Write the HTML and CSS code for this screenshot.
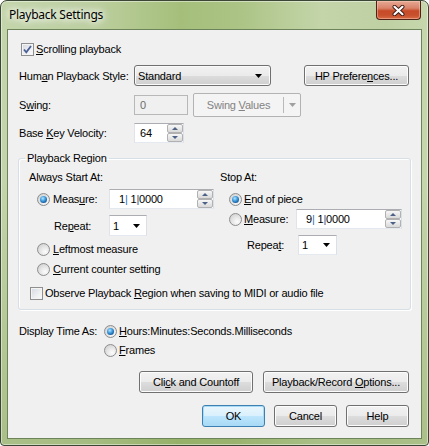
FILE: index.html
```html
<!DOCTYPE html>
<html lang="en">
<head>
    <meta charset="UTF-8">
    <title>Playback Settings</title>
    <link rel="stylesheet" href="styles.css">
</head>
<body>

<div class="window">
    <div class="titlebar">
        <span class="title">Playback Settings</span>
        <div class="close">
            <svg width="13" height="11" viewBox="0 0 13 11">
                <path d="M2.5 1.8 L10.5 9.2 M10.5 1.8 L2.5 9.2" stroke="#3d1a14" stroke-width="4" stroke-linecap="round"/>
                <path d="M2.5 1.8 L10.5 9.2 M10.5 1.8 L2.5 9.2" stroke="#fff" stroke-width="2.2" stroke-linecap="round"/>
            </svg>
        </div>
    </div>

    <div class="client">
        <!-- верхні налаштування -->
        <div class="row r-scroll">
            <span class="check on"><svg width="11" height="11" viewBox="0 0 11 11"><path d="M2 5.5 L4.3 8.3 L9 2" stroke="#4a5f97" stroke-width="1.8" fill="none"/></svg></span>
            <span class="txt"><u>S</u>crolling playback</span>
        </div>

        <div class="row r-style">
            <span class="lbl">Hum<u>a</u>n Playback Style:</span>
            <div class="combo">
                <span>Standard</span>
                <svg width="7" height="4" viewBox="0 0 7 4"><path d="M0 0 H7 L3.5 4 Z" fill="#000"/></svg>
            </div>
            <div class="btn hp"><span>HP Prefere<u>n</u>ces...</span></div>
        </div>

        <div class="row r-swing">
            <span class="lbl">S<u>w</u>ing:</span>
            <div class="field disabled sw">0</div>
            <div class="split">
                <span class="split-main">Swing <u>V</u>alues</span>
                <span class="split-arrow"><svg width="7" height="4" viewBox="0 0 7 4"><path d="M0 0 H7 L3.5 4 Z" fill="#a0a0a0"/></svg></span>
            </div>
        </div>

        <div class="row r-vel">
            <span class="lbl">Base <u>K</u>ey Velocity:</span>
            <div class="field spinfield vel">
                <span class="val">64</span>
                <span class="spin"><span class="up"></span><span class="down"></span></span>
            </div>
        </div>

        <!-- Область відтворення -->
        <fieldset class="region">
            <legend>Playback Region</legend>
            <div class="cols">
                <div class="col col-start">
                    <div class="head">Always Start At:</div>
                    <div class="row m-row">
                        <span class="radio on"></span>
                        <span class="rtxt w56">Meas<u>u</u>re:</span>
                        <div class="field spinfield mea">
                            <span class="val">1<i>|</i> 1<b>|</b>0000</span>
                            <span class="spin"><span class="up"></span><span class="down"></span></span>
                        </div>
                    </div>
                    <div class="row rep-row">
                        <span class="replbl l-left">Re<u>p</u>eat:</span>
                        <div class="field drop rep-l">
                            <span>1</span>
                            <svg width="7" height="4" viewBox="0 0 7 4"><path d="M0 0 H7 L3.5 4 Z" fill="#000"/></svg>
                        </div>
                    </div>
                    <div class="row opt-row">
                        <span class="radio"></span>
                        <span class="rtxt"><u>L</u>eftmost measure</span>
                    </div>
                    <div class="row opt-row">
                        <span class="radio"></span>
                        <span class="rtxt"><u>C</u>urrent counter setting</span>
                    </div>
                </div>

                <div class="col col-stop">
                    <div class="head">Stop At:</div>
                    <div class="row end-row">
                        <span class="radio on"></span>
                        <span class="rtxt tight"><u>E</u>nd of piece</span>
                    </div>
                    <div class="row m2-row">
                        <span class="radio"></span>
                        <span class="rtxt tight w52"><u>M</u>easure:</span>
                        <div class="field spinfield mea2">
                            <span class="val">9<i>|</i> 1<b>|</b>0000</span>
                            <span class="spin"><span class="up"></span><span class="down"></span></span>
                        </div>
                    </div>
                    <div class="row rep2-row">
                        <span class="replbl l-right">Repea<u>t</u>:</span>
                        <div class="field drop rep-r">
                            <span>1</span>
                            <svg width="7" height="4" viewBox="0 0 7 4"><path d="M0 0 H7 L3.5 4 Z" fill="#000"/></svg>
                        </div>
                    </div>
                </div>
            </div>

            <div class="row observe">
                <span class="check"></span>
                <span class="txt">Observe Playback <u>R</u>egion when saving to MIDI or audio file</span>
            </div>
        </fieldset>

        <div class="row disp-row">
            <span class="disp-lbl">Display Time As:</span>
            <span class="radio on"></span>
            <span class="rtxt tight"><u>H</u>ours:Minutes:Seconds.Milliseconds</span>
        </div>
        <div class="row disp-row2">
            <span class="radio"></span>
            <span class="rtxt tight"><u>F</u>rames</span>
        </div>

        <div class="btnrow first">
            <div class="btn b-click"><span>Cli<u>c</u>k and Countoff</span></div>
            <div class="btn b-opts"><span>Playback/Record <u>O</u>ptions...</span></div>
        </div>
        <div class="btnrow second">
            <div class="btn default b-small"><span>OK</span></div>
            <div class="btn b-small"><span>Cancel</span></div>
            <div class="btn b-small"><span>Help</span></div>
        </div>
    </div>
</div>

</body>
</html>
```

FILE: styles.css
```css
* {
    box-sizing: border-box;
}
body {
    margin: 0;
    background-color: #ffffff;
    font-family: "Liberation Sans", Arial, sans-serif;
    font-size: 11px;
    letter-spacing: -0.2px;
    color: #000000;
}
u {
    text-decoration: underline;
    text-underline-offset: 1px;
}

/* рамка вікна */
.window {
    width: 429px;
    height: 446px;
    border: 1px solid #3b4634;
    border-radius: 7px 7px 4px 4px;
    padding: 0 6px 6px 6px;
    display: flex;
    flex-direction: column;
    background:
        linear-gradient(180deg, rgba(255, 255, 255, 0) 40%, rgba(120, 150, 70, 0.35) 100%),
        linear-gradient(90deg, #c4d5ab 0%, #bccf9f 22%, #a5bf7b 42%, #abc384 55%, #c3d5a9 75%, #bfd1a3 90%, #c6d7ad 100%);
    box-shadow: inset 0 0 0 1px rgba(255, 255, 255, 0.45);
}
.titlebar {
    height: 28px;
    display: flex;
    align-items: flex-start;
}
.title {
    font-family: "Noto Sans", sans-serif;
    font-size: 12px;
    letter-spacing: -0.25px;
    line-height: 28px;
    padding-left: 2px;
    color: #000000;
    text-shadow: 0 0 6px #ffffff, 0 0 10px #ffffff, 0 0 12px rgba(255, 255, 255, 0.8);
}
.close {
    margin-left: auto;
    margin-right: 1px;
    width: 45px;
    height: 19px;
    border: 1px solid #4f2119;
    border-top: none;
    border-radius: 0 0 4px 4px;
    background: linear-gradient(180deg, #e7a995 0%, #d9836a 40%, #c74a28 55%, #c9512e 80%, #d86b45 100%);
    box-shadow: inset 0 0 0 1px rgba(255, 210, 190, 0.45);
    display: flex;
    align-items: center;
    justify-content: center;
}

/* клієнтська область */
.client {
    flex: 1;
    background-color: #f0f0f0;
    border: 1px solid #6d845a;
    padding: 0 12px 0 10px;
    display: flex;
    flex-direction: column;
}
.row {
    display: flex;
    align-items: center;
    white-space: nowrap;
}
.r-scroll {
    height: 14px;
    margin-top: 12px;
    padding-left: 3px;
}
.r-style {
    height: 21px;
    margin-top: 9px;
}
.r-swing {
    height: 24px;
    margin-top: 7px;
}
.r-vel {
    height: 20px;
    margin-top: 6px;
}
.lbl {
    width: 116px;
    padding-left: 1px;
}
.txt {
    margin-left: 2px;
}

/* прапорці і перемикачі */
.check {
    width: 13px;
    height: 13px;
    border: 1px solid #8e8f8f;
    background: linear-gradient(135deg, #d4d8de 0%, #eef0f2 60%, #fbfbfb 100%);
    box-shadow: inset 0 0 0 1px #f4f4f4;
    display: flex;
    align-items: center;
    justify-content: center;
    flex-shrink: 0;
}
.radio {
    width: 13px;
    height: 13px;
    border-radius: 50%;
    border: 1px solid #8d8d8d;
    background: radial-gradient(circle at 65% 70%, #fcfcfc 0%, #e6e6e6 45%, #c8c8c8 100%);
    flex-shrink: 0;
    display: flex;
    align-items: center;
    justify-content: center;
}
.radio.on::after {
    content: "";
    width: 7px;
    height: 7px;
    border-radius: 50%;
    background: radial-gradient(circle at 40% 35%, #b8e4ff 0%, #58b0ea 30%, #1d6bb0 65%, #173f66 100%);
}
.rtxt {
    margin-left: 3px;
}
.rtxt.tight {
    margin-left: 2px;
}
.w56 {
    width: 56px;
}
.w52 {
    width: 52px;
}

/* поля вводу */
.field {
    height: 20px;
    background-color: #ffffff;
    border: 1px solid;
    border-color: #abadb3 #dbdfe6 #e3e9ef #e2e3ea;
    display: flex;
    align-items: center;
}
.field.disabled {
    background-color: #f0f0f0;
    border-color: #b8b8b8;
    color: #6d6d6d;
    padding-left: 5px;
}
.sw {
    width: 54px;
}
.spinfield .val {
    flex: 1;
    padding-left: 7px;
}
.spin {
    width: 16px;
    height: 18px;
    display: flex;
    flex-direction: column;
    gap: 0;
}
.spin span {
    flex: 1;
    border: 1px solid #b1b1b1;
    border-radius: 2px;
    background: linear-gradient(180deg, #f7f7f7 0%, #e8e8e8 50%, #d9d9d9 100%);
    display: flex;
    align-items: center;
    justify-content: center;
}
.spin .up::after {
    content: "";
    border-left: 3px solid transparent;
    border-right: 3px solid transparent;
    border-bottom: 3px solid #4d6185;
}
.spin .down::after {
    content: "";
    border-left: 3px solid transparent;
    border-right: 3px solid transparent;
    border-top: 3px solid #4d6185;
}
.vel {
    width: 50px;
}
.vel .val {
    padding-left: 5px;
}
.mea {
    width: 105px;
}
.mea .val, .mea2 .val {
    padding-left: 9px;
}
.mea2 {
    width: 106px;
}
.val i {
    font-style: normal;
    color: #2f6fc0;
}
.val b {
    font-weight: normal;
    color: #3a4f7a;
}

/* випадаючі списки */
.combo {
    width: 137px;
    height: 21px;
    border: 1px solid #707070;
    border-radius: 3px;
    background: linear-gradient(180deg, #f2f2f2 0%, #ebebeb 50%, #dddddd 50%, #cfcfcf 100%);
    box-shadow: inset 0 0 0 1px #fafafa;
    display: flex;
    align-items: center;
    justify-content: space-between;
    padding: 0 8px 0 3px;
}
.drop {
    justify-content: space-between;
    padding: 0 6px 0 3px;
    height: 21px;
}
.rep-l {
    width: 38px;
}
.rep-r {
    width: 39px;
    height: 20px;
}

/* кнопки */
.btn {
    height: 21px;
    border: 1px solid #707070;
    border-radius: 3px;
    background: linear-gradient(180deg, #f2f2f2 0%, #ebebeb 50%, #dddddd 50%, #cfcfcf 100%);
    box-shadow: inset 0 0 0 1px #fcfcfc;
    display: flex;
    align-items: center;
    justify-content: center;
    white-space: nowrap;
}
.btn.default {
    border-color: #3c7fb1;
    background: linear-gradient(180deg, #eaf6fd 0%, #d9f0fc 50%, #bee6fd 50%, #a7d9f5 100%);
    box-shadow: inset 0 0 0 1px #a8dcf6;
}
.hp {
    margin-left: auto;
    width: 105px;
}
.split {
    margin-left: 5px;
    width: 108px;
    height: 24px;
    border: 1px solid #b3b3b3;
    border-radius: 2px;
    background-color: #f4f4f4;
    color: #838383;
    display: flex;
    align-items: center;
}
.split-main {
    width: 89px;
    text-align: center;
}
.split-arrow {
    height: 16px;
    flex: 1;
    border-left: 1px solid #b9b9b9;
    display: flex;
    align-items: center;
    justify-content: center;
}

/* група Playback Region */
.region {
    margin: 8px -2px 0 0;
    min-width: 0;
    border: 1px solid #d5dfe5;
    border-radius: 3px;
    padding: 0 0 9px 10px;
    box-shadow: 1px 1px 0 #ffffff, inset 1px 1px 0 #ffffff;
}
.region legend {
    margin-left: -4px;
    padding: 0 2px;
    line-height: 14px;
}
.cols {
    display: flex;
    margin-top: 5px;
}
.col-start {
    width: 191px;
}
.col-stop {
    flex: 1;
}
.head {
    height: 14px;
    line-height: 14px;
}
.m-row {
    height: 20px;
    margin-top: 5px;
    padding-left: 8px;
}
.rep-row {
    height: 21px;
    margin-top: 6px;
}
.replbl.l-left {
    margin-left: 25px;
    width: 55px;
}
.opt-row {
    height: 14px;
    margin-top: 6px;
    padding-left: 8px;
}
.end-row {
    height: 14px;
    margin-top: 8px;
    padding-left: 9px;
}
.m2-row {
    height: 20px;
    margin-top: 3px;
    padding-left: 9px;
}
.rep2-row {
    height: 20px;
    margin-top: 6px;
}
.replbl.l-right {
    margin-left: 27px;
    width: 51px;
}
.observe {
    height: 14px;
    margin-top: 10px;
    padding-left: 1px;
}

/* формат часу */
.disp-row {
    height: 14px;
    margin-top: 14px;
}
.disp-lbl {
    width: 86px;
    padding-left: 1px;
}
.disp-row2 {
    height: 14px;
    margin-top: 5px;
    padding-left: 86px;
}

.btnrow {
    display: flex;
    justify-content: flex-end;
}
.btnrow.first {
    margin-top: 14px;
    gap: 10px;
}
.btnrow.first .btn {
    height: 22px;
}
.btnrow.second {
    margin-top: 12px;
    gap: 9px;
}
.btnrow.second .btn {
    height: 22px;
}
.b-click {
    width: 114px;
}
.b-opts {
    width: 146px;
}
.b-small {
    width: 63px;
}
```
